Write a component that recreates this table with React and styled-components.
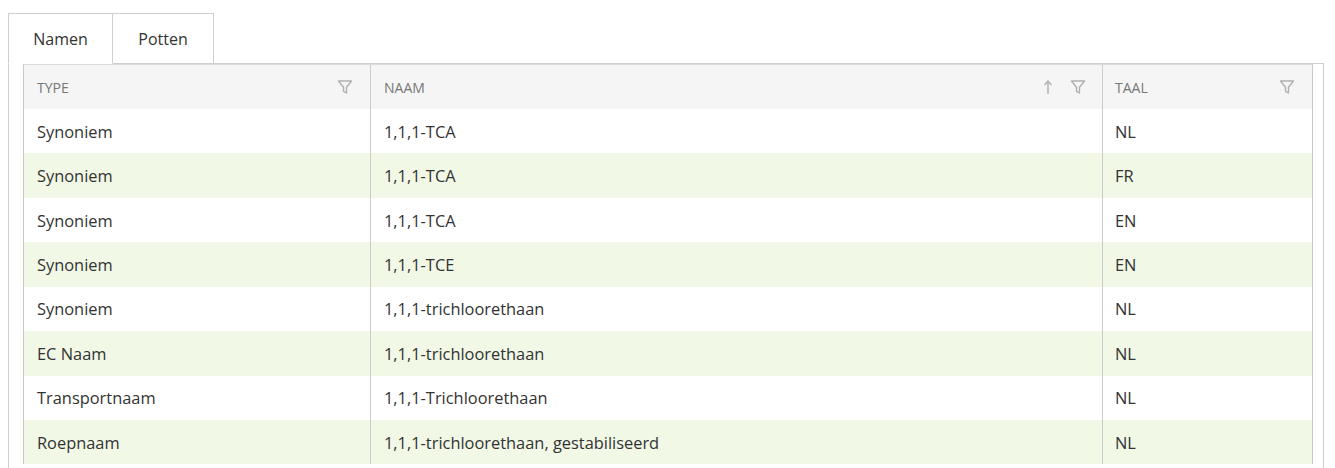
import React from "react";
import styled, { createGlobalStyle } from "styled-components";

const GlobalStyle = createGlobalStyle`
  body {
    margin: 0;
    background: #fff;
    font-family: "Open Sans", "Noto Sans", sans-serif;
    color: #333;
    overflow: hidden;
  }
`;

const Page = styled.div`
  padding: 13px 11px 0 8px;
`;

const TabStrip = styled.div`
  display: flex;
  height: 51px;
`;

const Tab = styled.div`
  width: ${(props) => props.w}px;
  box-sizing: border-box;
  display: flex;
  align-items: center;
  justify-content: center;
  font-size: 16px;
  color: #333;
  border: 1px solid #cfcfcf;
  border-left: ${(props) => (props.first ? "1px solid #cfcfcf" : "none")};
  border-bottom: ${(props) => (props.active ? "1px solid transparent" : "1px solid #cfcfcf")};
  background: #fff;
`;

const TabRest = styled.div`
  flex: 1;
  border-bottom: 1px solid #cfcfcf;
`;

const Panel = styled.div`
  border-left: 1px solid #cfcfcf;
  border-right: 1px solid #cfcfcf;
  padding: 0 10px 0 14px;
  height: 404px;
  overflow: hidden;
`;

const Grid = styled.div`
  border-left: 1px solid #c8c8c8;
  border-right: 1px solid #c8c8c8;
  border-top: 1px solid #dcdcdc;
`;

const Row = styled.div`
  display: grid;
  grid-template-columns: 346px 733px 1fr;
  height: ${(props) => (props.header ? "44px" : "44.43px")};
  background: ${(props) =>
    props.header ? "#f5f5f5" : props.alt ? "#f1f8e6" : "#fff"};
`;

const Cell = styled.div`
  display: flex;
  align-items: center;
  padding: 0 13px 0 ${(props) => (props.last ? "12px" : "13px")};
  font-size: ${(props) => (props.header ? "14px" : "16.4px")};
  color: ${(props) => (props.header ? "#777" : "#333")};
  text-transform: ${(props) => (props.header ? "uppercase" : "none")};
  border-left: ${(props) => (props.first ? "none" : "1px solid #cccccc")};
  margin-left: ${(props) => (props.last ? "-1px" : "0")};
  white-space: nowrap;
`;

const Label = styled.span`
  flex: 1;
`;

const Icons = styled.span`
  display: flex;
  align-items: center;
  gap: 17px;
  color: #b0b0b0;
  margin-right: 4px;
`;

const FilterIcon = () => (
  <svg width="16" height="16" viewBox="0 0 16 16" fill="none">
    <path
      d="M1.5 2h13L9.5 8.2v5.8L6.5 12.3V8.2z"
      stroke="currentColor"
      strokeWidth="1.4"
      strokeLinejoin="round"
    />
  </svg>
);

const SortUpIcon = () => (
  <svg width="10" height="16" viewBox="0 0 10 16" fill="none">
    <path d="M5 2v13M1.5 6L5 2l3.5 4" stroke="currentColor" strokeWidth="1.4" />
  </svg>
);

const rows = [
  ["Synoniem", "1,1,1-TCA", "NL"],
  ["Synoniem", "1,1,1-TCA", "FR"],
  ["Synoniem", "1,1,1-TCA", "EN"],
  ["Synoniem", "1,1,1-TCE", "EN"],
  ["Synoniem", "1,1,1-trichloorethaan", "NL"],
  ["EC Naam", "1,1,1-trichloorethaan", "NL"],
  ["Transportnaam", "1,1,1-Trichloorethaan", "NL"],
  ["Roepnaam", "1,1,1-trichloorethaan, gestabiliseerd", "NL"],
];

export default function App() {
  return (
    <Page>
      <GlobalStyle />
      <TabStrip>
        <Tab w={105} first active>
          Namen
        </Tab>
        <Tab w={101}>Potten</Tab>
        <TabRest />
      </TabStrip>
      <Panel>
        <Grid>
          <Row header>
            <Cell header first>
              <Label>Type</Label>
              <Icons>
                <FilterIcon />
              </Icons>
            </Cell>
            <Cell header>
              <Label>Naam</Label>
              <Icons>
                <SortUpIcon />
                <FilterIcon />
              </Icons>
            </Cell>
            <Cell header last>
              <Label>Taal</Label>
              <Icons>
                <FilterIcon />
              </Icons>
            </Cell>
          </Row>
          {rows.map((r, i) => (
            <Row key={i} alt={i % 2 === 1}>
              <Cell first>{r[0]}</Cell>
              <Cell>{r[1]}</Cell>
              <Cell last>{r[2]}</Cell>
            </Row>
          ))}
        </Grid>
      </Panel>
    </Page>
  );
}
